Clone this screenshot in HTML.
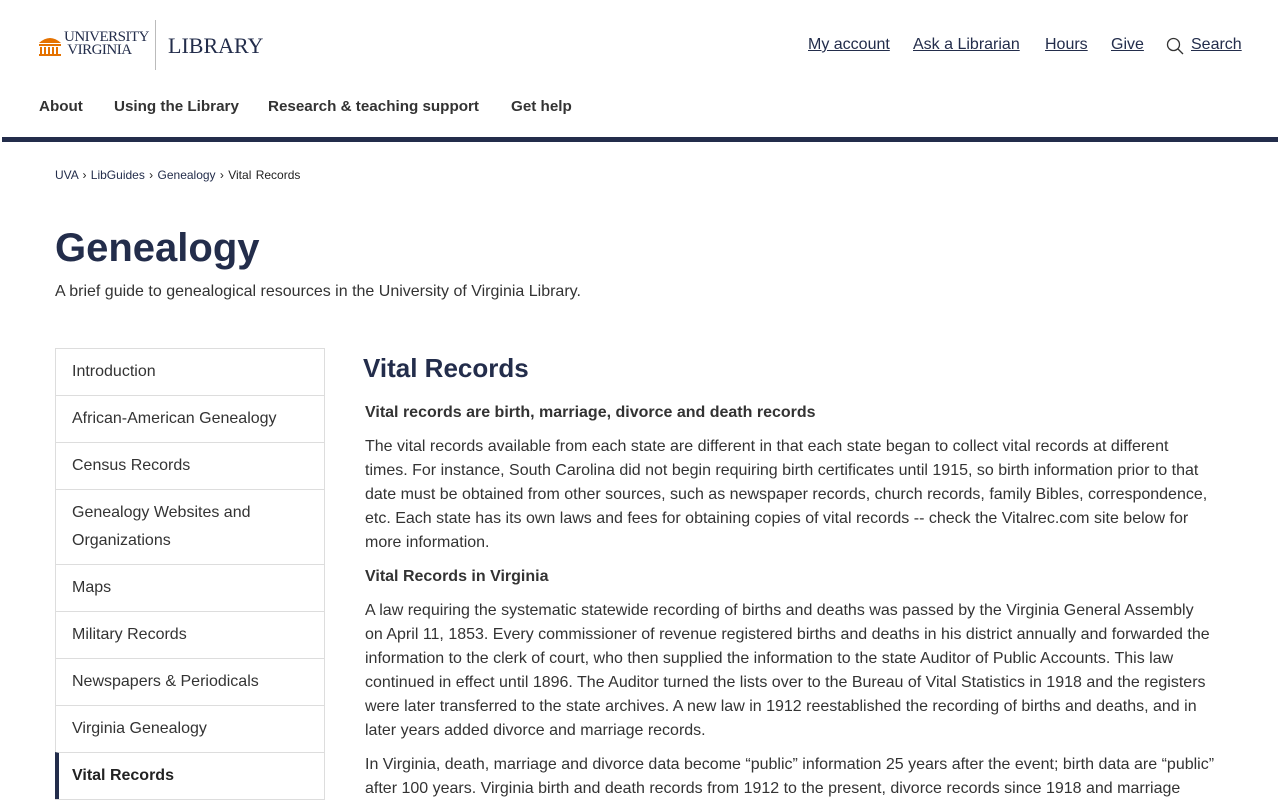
<!DOCTYPE html>
<html><head><meta charset="utf-8"><style>
body{margin:0;font-family:"Liberation Sans",Arial,sans-serif;color:#333;background:#fff;width:1280px;height:800px;overflow:hidden;position:relative}
a{color:#232d4b}
.abs{position:absolute}
.util a{position:absolute;top:36px;font-size:16px;color:#232d4b;text-decoration:underline}
.nav span{position:absolute;top:98px;font-size:15.2px;font-weight:bold;color:#333}
.bar{position:absolute;left:2px;top:137px;width:1276px;height:5px;background:#232d4b}
.bc{position:absolute;top:168px;left:55px;font-size:12px;color:#222;word-spacing:1px}
.bc a{color:#232d4b}
h1{position:absolute;left:55px;top:226px;margin:0;font-size:40px;color:#232d4b;font-weight:bold}
.sub{position:absolute;left:55px;top:283px;font-size:16px}
.side{position:absolute;left:55px;top:348px;width:268px;border:1px solid #ddd}
.side div{border-top:1px solid #ddd;padding:9px 16px;font-size:16px;line-height:28px;color:#333}
.side div:first-child{border-top:0}
.side .act{font-weight:bold;border-left:4px solid #232d4b;padding-left:13px;margin-left:-1px;color:#222}
.main{position:absolute;left:365px;top:351px;width:900px;font-size:16px;line-height:24px;color:#333;white-space:nowrap}
.main h2{margin:0 0 16px -2px;font-size:26px;color:#232d4b;line-height:34px}
.main h3{margin:0 0 10px;font-size:16px}
.main p{margin:0 0 10px}
</style></head><body>
<svg class="abs" style="left:38px;top:33px" width="24" height="24" viewBox="0 0 24 24"><path d="M1 10 Q12 0 23 10Z" fill="#e57200"/><rect x="1" y="11" width="22" height="2" fill="#e57200"/><g fill="#e57200"><rect x="2" y="14" width="2" height="8"/><rect x="6" y="14" width="2" height="8"/><rect x="10" y="14" width="2" height="8"/><rect x="14" y="14" width="2" height="8"/><rect x="18" y="14" width="2" height="8"/><rect x="1" y="21" width="22" height="2"/></g></svg>
<div class="abs" style="left:64px;top:31px;font-family:'Liberation Serif',serif;font-size:15px;line-height:13px;color:#232d4b;letter-spacing:-0.5px">UNIVERSITY<br>&nbsp;VIRGINIA</div>
<div class="abs" style="left:155px;top:20px;width:1px;height:50px;background:#bbb"></div>
<div class="abs" style="left:168px;top:33px;font-family:'Liberation Serif',serif;font-size:22px;color:#232d4b">LIBRARY</div>
<div class="util"><a style="left:808px">My account</a><a style="left:913px">Ask a Librarian</a><a style="left:1045px">Hours</a><a style="left:1111px">Give</a><a style="left:1191px">Search</a></div>
<svg class="abs" style="left:1166px;top:37px" width="18" height="18" viewBox="0 0 18 18"><circle cx="7.5" cy="7.5" r="6" fill="none" stroke="#333" stroke-width="1.3"/><path d="M12 12 L17 17" stroke="#333" stroke-width="1.3"/></svg>
<div class="nav"><span style="left:39px">About</span><span style="left:114px">Using the Library</span><span style="left:268px">Research &amp; teaching support</span><span style="left:511px">Get help</span></div>
<div class="bar"></div>
<div class="bc"><a>UVA</a> › <a>LibGuides</a> › <a>Genealogy</a> › Vital Records</div>
<h1>Genealogy</h1>
<div class="sub">A brief guide to genealogical resources in the University of Virginia Library.</div>
<div class="side">
<div>Introduction</div><div>African-American Genealogy</div><div>Census Records</div><div>Genealogy Websites and Organizations</div><div>Maps</div><div>Military Records</div><div>Newspapers &amp; Periodicals</div><div>Virginia Genealogy</div><div class="act">Vital Records</div>
</div>
<div class="main">
<h2>Vital Records</h2>
<h3>Vital records are birth, marriage, divorce and death records</h3>
<p>The vital records available from each state are different in that each state began to collect vital records at different<br>times. For instance, South Carolina did not begin requiring birth certificates until 1915, so birth information prior to that<br>date must be obtained from other sources, such as newspaper records, church records, family Bibles, correspondence,<br>etc. Each state has its own laws and fees for obtaining copies of vital records -- check the Vitalrec.com site below for<br>more information.</p>
<h3>Vital Records in Virginia</h3>
<p>A law requiring the systematic statewide recording of births and deaths was passed by the Virginia General Assembly<br>on April 11, 1853. Every commissioner of revenue registered births and deaths in his district annually and forwarded the<br>information to the clerk of court, who then supplied the information to the state Auditor of Public Accounts. This law<br>continued in effect until 1896. The Auditor turned the lists over to the Bureau of Vital Statistics in 1918 and the registers<br>were later transferred to the state archives. A new law in 1912 reestablished the recording of births and deaths, and in<br>later years added divorce and marriage records.</p>
<p>In Virginia, death, marriage and divorce data become “public” information 25 years after the event; birth data are “public”<br>after 100 years. Virginia birth and death records from 1912 to the present, divorce records since 1918 and marriage</p>
</div>
</body></html>
